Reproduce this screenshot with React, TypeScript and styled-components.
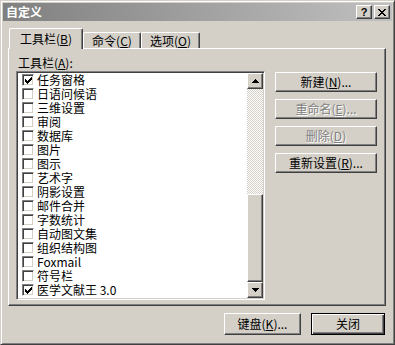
import React from 'react';
import styled, { createGlobalStyle, css } from 'styled-components';

const face = '#d4d0c8';
const shadow = '#808080';
const dark = '#404040';

const GlobalStyle = createGlobalStyle`
  html, body { margin: 0; padding: 0; background: ${face}; }
  body {
    font-family: "Noto Sans CJK SC", "Liberation Sans", sans-serif;
    font-size: 12px;
    color: #000;
  }
`;

const raised = css`
  border: 1px solid;
  border-color: #fff ${dark} ${dark} #fff;
  box-shadow: inset -1px -1px ${shadow};
  background: ${face};
  box-sizing: border-box;
`;

const Window = styled.div`
  width: 395px;
  height: 345px;
  box-sizing: border-box;
  border: 1px solid;
  border-color: ${face} ${dark} ${dark} ${face};
  box-shadow: inset 1px 1px #fff, inset -1px -1px ${shadow};
  padding: 2px;
  background: ${face};
  display: flex;
  flex-direction: column;
`;

const TitleBar = styled.div`
  height: 18px;
  display: flex;
  align-items: center;
  gap: 2px;
  padding: 0 2px 0 3px;
  background: linear-gradient(to right, #808080, #c0c0c0);
`;

const Title = styled.span`
  flex: 1;
  color: #fff;
  font-weight: bold;
  line-height: 18px;
`;

const CaptionButton = styled.div`
  ${raised};
  width: 16px;
  height: 14px;
  display: flex;
  align-items: center;
  justify-content: center;
  font-family: "Liberation Sans", sans-serif;
  font-weight: bold;
  font-size: 11px;
  line-height: 12px;
`;

const Body = styled.div`
  flex: 1;
  display: flex;
  flex-direction: column;
  padding: 7px 6px 0 5px;
`;

const TabRow = styled.div`
  height: 20px;
  display: flex;
  align-items: flex-end;
  padding-left: 1px;
`;

const Tab = styled.div<{ $active?: boolean; $w: number }>`
  width: ${p => p.$w}px;
  height: ${p => (p.$active ? 21 : 16)}px;
  margin-bottom: ${p => (p.$active ? -1 : 0)}px;
  box-sizing: border-box;
  border-top: 1px solid #fff;
  border-left: 1px solid #fff;
  border-right: 1px solid ${dark};
  box-shadow: inset -1px 0 ${shadow};
  border-radius: 2px 2px 0 0;
  background: ${face};
  position: relative;
  z-index: ${p => (p.$active ? 1 : 0)};
  display: flex;
  align-items: center;
  justify-content: center;
  line-height: 14px;
  white-space: nowrap;
`;

const Accel = styled.span`
  text-decoration: underline;
`;

const Panel = styled.div`
  height: 258px;
  box-sizing: border-box;
  border: 1px solid;
  border-color: #fff ${dark} ${dark} #fff;
  box-shadow: inset -1px -1px ${shadow};
  display: flex;
  gap: 10px;
  padding: 6px 0 0 7px;
`;

const LeftCol = styled.div`
  display: flex;
  flex-direction: column;
`;

const Label = styled.div`
  height: 16px;
  line-height: 16px;
  padding-left: 2px;
`;

const ListBox = styled.div`
  width: 249px;
  height: 229px;
  box-sizing: border-box;
  border: 1px solid;
  border-color: ${shadow} #fff #fff ${shadow};
  box-shadow: inset 1px 1px ${dark}, inset -1px -1px ${face};
  padding: 1px;
  background: #fff;
  display: flex;
`;

const Items = styled.div`
  flex: 1;
  overflow: hidden;
  padding-top: 0;
`;

const Row = styled.div`
  height: 14px;
  display: flex;
  align-items: center;
  padding-left: 4px;
  white-space: nowrap;
  line-height: 14px;
`;

const Check = styled.div`
  width: 12px;
  height: 12px;
  box-sizing: border-box;
  border: 1px solid;
  border-color: ${shadow} #fff #fff ${shadow};
  box-shadow: inset 1px 1px ${dark}, inset -1px -1px ${face};
  background: #fff;
  margin-right: 3px;
  display: flex;
  align-items: center;
  justify-content: center;
  flex: none;
`;

const ScrollBar = styled.div`
  width: 16px;
  display: flex;
  flex-direction: column;
`;

const ScrollButton = styled.div`
  ${raised};
  height: 16px;
  display: flex;
  align-items: center;
  justify-content: center;
`;

const Track = styled.div`
  flex: 1;
  background-image: conic-gradient(#fff 25%, ${face} 0 50%, #fff 0 75%, ${face} 0);
  background-size: 2px 2px;
`;

const Thumb = styled.div`
  ${raised};
  height: 88px;
`;

const RightCol = styled.div`
  display: flex;
  flex-direction: column;
  gap: 7px;
  padding-top: 17px;
`;

const Button = styled.div<{ $w: number; $h?: number; $disabled?: boolean }>`
  ${raised};
  width: ${p => p.$w}px;
  height: ${p => p.$h ?? 20}px;
  display: flex;
  align-items: center;
  justify-content: center;
  line-height: 14px;
  white-space: nowrap;
  color: ${p => (p.$disabled ? shadow : '#000')};
  text-shadow: ${p => (p.$disabled ? '1px 1px #fff' : 'none')};
`;

const DefaultButton = styled(Button)`
  border-color: #000;
  box-shadow: inset 1px 1px #fff, inset -1px -1px ${dark}, inset -2px -2px ${shadow};
`;

const Footer = styled.div`
  display: flex;
  justify-content: flex-end;
  gap: 10px;
  margin-top: 7px;
  padding-right: 1px;
`;

const toolbars: { name: string; checked?: boolean }[] = [
  { name: '任务窗格', checked: true },
  { name: '日语问候语' },
  { name: '三维设置' },
  { name: '审阅' },
  { name: '数据库' },
  { name: '图片' },
  { name: '图示' },
  { name: '艺术字' },
  { name: '阴影设置' },
  { name: '邮件合并' },
  { name: '字数统计' },
  { name: '自动图文集' },
  { name: '组织结构图' },
  { name: 'Foxmail' },
  { name: '符号栏' },
  { name: '医学文献王 3.0', checked: true },
];

const CheckMark = () => (
  <svg width="7" height="7" viewBox="0 0 7 7" shapeRendering="crispEdges">
    <path d="M6 0h1v1H6zM5 1h2v1H5zM0 2h1v1H0zM4 2h3v1H4zM0 3h2v1H0zM3 3h3v1H3zM0 4h5v1H0zM1 5h3v1H1zM2 6h1v1H2z" fill="#000" />
  </svg>
);

const Arrow = ({ down }: { down?: boolean }) => (
  <svg width="7" height="4" viewBox="0 0 7 4" shapeRendering="crispEdges">
    <path d={down ? 'M0 0h7v1H0zM1 1h5v1H1zM2 2h3v1H2zM3 3h1v1H3z' : 'M3 0h1v1H3zM2 1h3v1H2zM1 2h5v1H1zM0 3h7v1H0z'} fill="#000" />
  </svg>
);

const CloseGlyph = () => (
  <svg width="8" height="7" viewBox="0 0 8 7" shapeRendering="crispEdges">
    <path d="M0 0h2v1H0zM6 0h2v1H6zM1 1h2v1H1zM5 1h2v1H5zM2 2h4v1H2zM3 3h2v1H3zM2 4h4v1H2zM1 5h2v1H1zM5 5h2v1H5zM0 6h2v1H0zM6 6h2v1H6z" fill="#000" />
  </svg>
);

export const CustomizeDialog = () => {
  return (
    <>
      <GlobalStyle />
      <Window>
        <TitleBar>
          <Title>自定义</Title>
          <CaptionButton>?</CaptionButton>
          <CaptionButton><CloseGlyph /></CaptionButton>
        </TitleBar>
        <Body>
          <TabRow>
            <Tab $active $w={74}>工具栏(<Accel>B</Accel>)</Tab>
            <Tab $w={58}>命令(<Accel>C</Accel>)</Tab>
            <Tab $w={59}>选项(<Accel>O</Accel>)</Tab>
          </TabRow>
          <Panel>
            <LeftCol>
              <Label>工具栏(<Accel>A</Accel>):</Label>
              <ListBox>
                <Items>
                  {toolbars.map(t => (
                    <Row key={t.name}>
                      <Check>{t.checked && <CheckMark />}</Check>
                      {t.name}
                    </Row>
                  ))}
                </Items>
                <ScrollBar>
                  <ScrollButton><Arrow /></ScrollButton>
                  <Track />
                  <Thumb />
                  <ScrollButton><Arrow down /></ScrollButton>
                </ScrollBar>
              </ListBox>
            </LeftCol>
            <RightCol>
              <Button $w={102}>新建(<Accel>N</Accel>)...</Button>
              <Button $w={102} $disabled>重命名(<Accel>E</Accel>)...</Button>
              <Button $w={102} $disabled>删除(<Accel>D</Accel>)</Button>
              <Button $w={102}>重新设置(<Accel>R</Accel>)...</Button>
            </RightCol>
          </Panel>
          <Footer>
            <Button $w={77} $h={22}>键盘(<Accel>K</Accel>)...</Button>
            <DefaultButton $w={74} $h={22}>关闭</DefaultButton>
          </Footer>
        </Body>
      </Window>
    </>
  );
};

export default CustomizeDialog;
